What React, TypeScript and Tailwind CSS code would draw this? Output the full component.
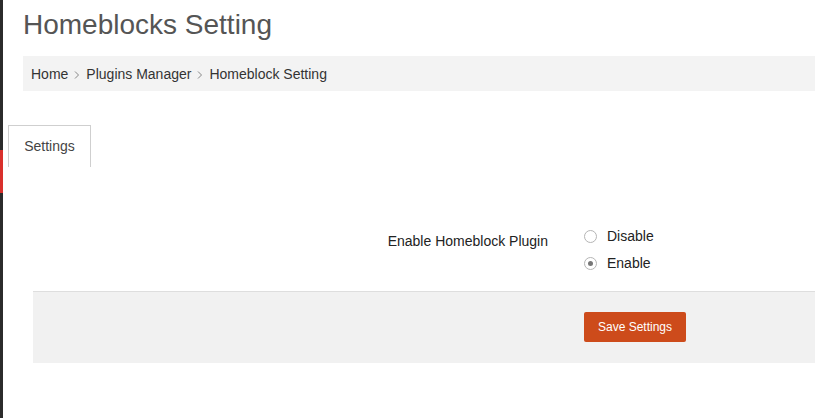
export default function App() {
  return (
    <div className="flex min-h-screen bg-white font-['Liberation_Sans',Arial,sans-serif]">
      {/* sidebar edge */}
      <div className="w-[3px] shrink-0 bg-[#2b2b2b]">
        <div className="mt-[150px] h-[43px] bg-[#d9302c]" />
      </div>

      <main className="flex-1">
        {/* Title */}
        <h1 className="pt-[8px] pl-[20px] text-[28px] leading-[34px] text-[#555]">Homeblocks Setting</h1>

        {/* Breadcrumb */}
        <nav className="ml-[20px] mt-[14px] flex h-[35px] items-center gap-[5px] bg-[#f3f3f3] pl-[8px] pt-[2px] text-[14px] text-[#333]">
          <span>Home</span>
          <Chevron />
          <span>Plugins Manager</span>
          <Chevron />
          <span>Homeblock Setting</span>
        </nav>

        {/* Tabs */}
        <div className="mt-[34px] ml-[5px] flex">
          <div className="flex h-[42px] w-[83px] items-center justify-center border-x border-t border-[#cfcfcf] text-[14px] text-[#444]">
            Settings
          </div>
        </div>

        {/* Form */}
        <div className="ml-[30px] mt-[56px] flex">
          <div className="w-[530px] pr-[15px] pt-[8px] text-right text-[14px] leading-[20px] text-[#222]">
            Enable Homeblock Plugin
          </div>
          <div className="flex flex-col pl-[21px]">
            <Radio label="Disable" />
            <Radio label="Enable" checked />
          </div>
        </div>

        {/* Footer */}
        <div className="ml-[30px] mt-[14px] flex h-[72px] border-t border-[#dedede] bg-[#f1f1f1] pt-[20px]">
          <div className="w-[551px]" />
          <button className="h-[30px] w-[102px] rounded-[2px] bg-[#cd4b1b] text-[12px] text-white">
            Save Settings
          </button>
        </div>
      </main>
    </div>
  );
}

function Chevron() {
  return (
    <svg width="8" height="10" viewBox="0 0 8 10" className="text-[#888]">
      <path d="M2 1.5 L5.5 5 L2 8.5" fill="none" stroke="currentColor" strokeWidth="1" />
    </svg>
  );
}

function Radio({ label, checked }: { label: string; checked?: boolean }) {
  return (
    <div className="flex h-[27px] items-center gap-[10px] text-[14px] text-[#222]">
      <span className="flex h-[13px] w-[13px] items-center justify-center rounded-full border border-[#b5b5b5] bg-white">
        {checked && <span className="h-[5px] w-[5px] rounded-full bg-[#777]" />}
      </span>
      <span>{label}</span>
    </div>
  );
}
